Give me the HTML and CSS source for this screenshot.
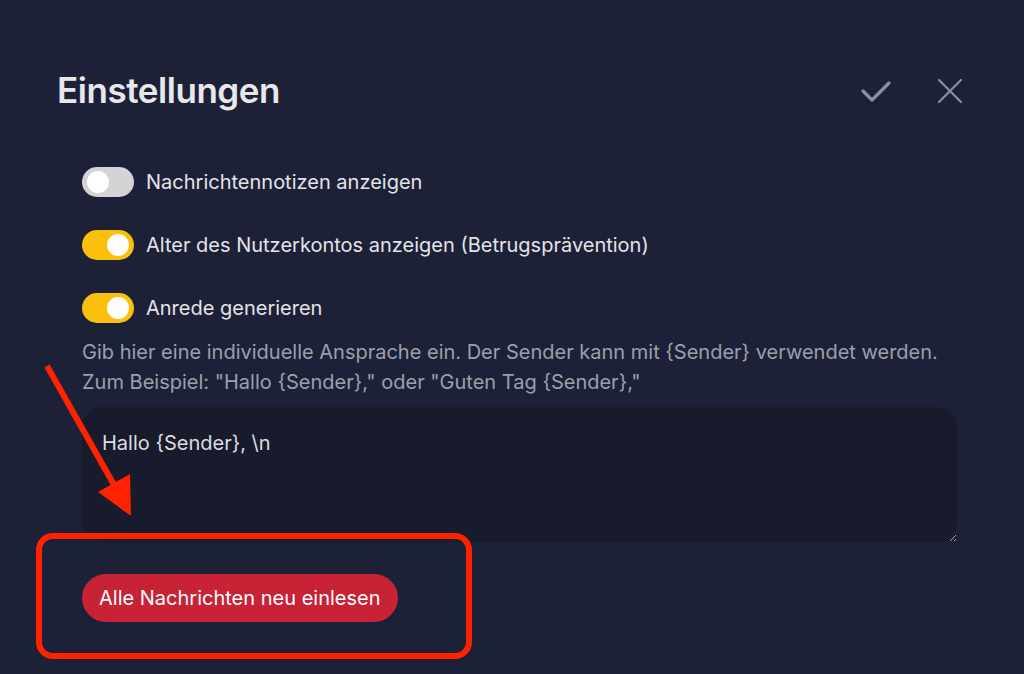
FILE: index.html
```html
<!DOCTYPE html>
<html lang="de">
<head>
<meta charset="utf-8">
<link rel="stylesheet" href="styles.css">
</head>
<body>
<div class="dialog">
  <header class="head">
    <h1 class="title">Einstellungen</h1>
    <div class="actions">
      <svg class="icon" width="32" height="32" viewBox="0 0 32 32"><path d="M3 16 L12 25 L29 8" fill="none" stroke="#8a8f9e" stroke-width="3.2" stroke-linecap="round" stroke-linejoin="round"/></svg>
      <svg class="icon" width="28" height="28" viewBox="0 0 28 28"><path d="M3 3 L25 25 M25 3 L3 25" fill="none" stroke="#8a8f9e" stroke-width="2.2" stroke-linecap="round"/></svg>
    </div>
  </header>
  <div class="content">
    <label class="row"><span class="toggle"><span class="knob"></span></span><span>Nachrichtennotizen anzeigen</span></label>
    <label class="row"><span class="toggle on"><span class="knob"></span></span><span>Alter des Nutzerkontos anzeigen (Betrugsprävention)</span></label>
    <label class="row"><span class="toggle on"><span class="knob"></span></span><span>Anrede generieren</span></label>
    <p class="help">Gib hier eine individuelle Ansprache ein. Der Sender kann mit {Sender} verwendet werden.<br>Zum Beispiel: "Hallo {Sender}," oder "Guten Tag {Sender},"</p>
    <textarea class="field">Hallo {Sender}, \n</textarea>
    <div class="btnrow"><button class="btn">Alle Nachrichten neu einlesen</button></div>
  </div>
</div>
<svg class="annot" width="1024" height="674" viewBox="0 0 1024 674">
  <rect x="39" y="536" width="430" height="120" rx="14" ry="14" fill="none" stroke="#ff2200" stroke-width="6"/>
  <line x1="47" y1="366" x2="118" y2="492" stroke="#ff2200" stroke-width="6" stroke-linecap="butt"/>
  <polygon points="98,492 130,474 131,516" fill="#ff2200"/>
</svg>
</body>
</html>
```
FILE: styles.css
```css
html, body {
  margin: 0;
  padding: 0;
  background: #1c2137;
  font-family: Inter, "Noto Sans", "Liberation Sans", sans-serif;
  color: #e6e6e8;
}
body {
  width: 1024px;
  height: 674px;
  overflow: hidden;
  position: relative;
}
.dialog {
  padding: 70px 60px 0 57px;
}
.head {
  display: flex;
  align-items: center;
  justify-content: space-between;
  height: 40px;
}
.title {
  margin: 0;
  font-size: 35px;
  font-weight: 600;
  color: #e8e8ea;
  letter-spacing: -0.45px;
}
.actions {
  display: flex;
  align-items: center;
  gap: 44px;
  padding-top: 2px;
}
.content {
  padding: 57px 0 0 25px;
  width: 875px;
}
.row {
  display: flex;
  align-items: center;
  gap: 12px;
  height: 30px;
  margin-bottom: 33px;
  font-size: 20px;
  color: #e4e4e7;
}
.row:nth-child(3) { margin-bottom: 14px; }
.toggle {
  width: 52px;
  height: 30px;
  border-radius: 15px;
  background: #d4d4d6;
  position: relative;
  flex: none;
}
.toggle.on { background: #fbbf0d; }
.knob {
  position: absolute;
  top: 4px;
  left: 5px;
  width: 22px;
  height: 22px;
  border-radius: 50%;
  background: #ffffff;
}
.toggle.on .knob { left: 25px; }
.help {
  margin: 0 0 10px;
  font-size: 20px;
  line-height: 30px;
  color: #9ba0ab;
  white-space: nowrap;
}
.field {
  display: block;
  box-sizing: border-box;
  width: 875px;
  height: 135px;
  background: #181b2b;
  border: none;
  border-radius: 20px;
  padding: 24px 20px;
  font-family: inherit;
  font-size: 20px;
  color: #dcdde0;
  resize: vertical;
  outline: none;
}
.btnrow {
  padding-top: 32px;
}
.btn {
  height: 48px;
  padding: 0 17px;
  border: none;
  border-radius: 24px;
  background: #c82236;
  color: #ffffff;
  font-family: inherit;
  font-size: 20px;
}
.annot {
  position: absolute;
  left: 0;
  top: 0;
  pointer-events: none;
}
```
